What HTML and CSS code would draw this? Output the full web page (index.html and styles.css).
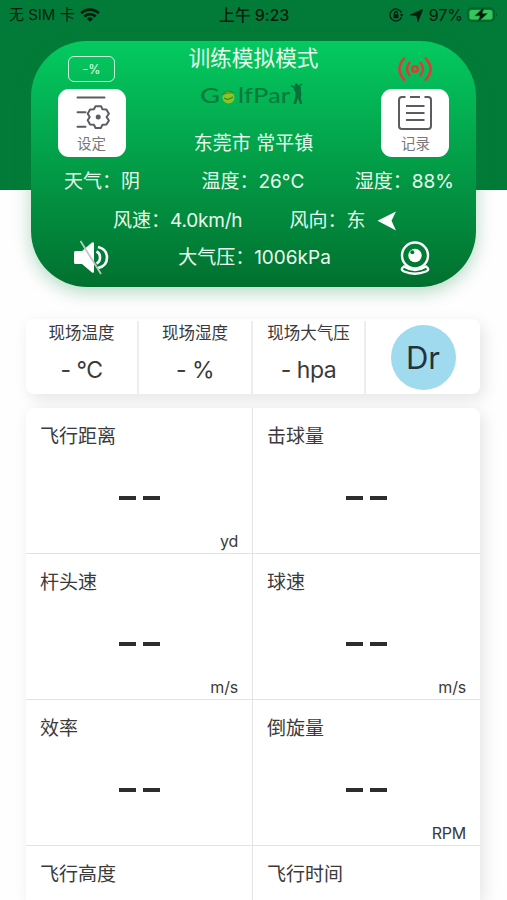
FILE: index.html
```html
<!DOCTYPE html>
<html lang="zh-CN">
<head>
    <meta charset="UTF-8">
    <meta name="viewport" content="width=device-width, initial-scale=1.0">
    <title>GolfPar</title>
    <link rel="stylesheet" href="styles.css">
</head>
<body>

    <div class="top">
        <div class="status-bar">
            <div class="status-left">
                <span>无 SIM 卡</span>
                <svg width="20" height="14" viewBox="0 0 20 14" fill="none" stroke="#031d0e" stroke-width="2.7">
                    <path d="M1.2 5.2a12.4 12.4 0 0 1 17.6 0"/>
                    <path d="M4.4 8.5a8 8 0 0 1 11.2 0"/>
                    <path d="M10 13.7 7 10.7a4.4 4.4 0 0 1 6 0z" fill="#031d0e" stroke="none"/>
                </svg>
            </div>
            <div class="status-time">上午 9:23</div>
            <div class="status-right">
                <svg width="15" height="14" viewBox="0 0 15 14" fill="none" stroke="#031d0e" stroke-width="1.3">
                    <path d="M12.6 5A6 6 0 1 0 12.6 9"/>
                    <path d="M10.8 6.2h3.8l-1.9 2.6z" fill="#031d0e" stroke="none"/>
                    <rect x="4.5" y="6.3" width="5" height="4" fill="#031d0e" stroke="none"/>
                    <path d="M5.5 6.5V5a1.5 1.5 0 0 1 3 0v1.5"/>
                </svg>
                <svg width="13" height="13" viewBox="0 0 13 13"><path d="M12.8.2 8 12.8 6.600 6.600.2 6z" fill="#031d0e" stroke="#031d0e" stroke-width=".6"/></svg>
                <span>97%</span>
                <svg class="battery" width="32" height="16" viewBox="0 0 32 16">
                    <rect x=".7" y="1.2" width="26.6" height="13" rx="4" fill="none" stroke="#075a2c" stroke-width="1.3"/>
                    <rect x="2.4" y="2.9" width="23" height="9.6" rx="2.5" fill="#35c759"/>
                    <path d="M29 5.5q2 2.2 0 4.6z" fill="#075a2c"/>
                    <path d="M17.3 0 7.8 8.8h5.4L10.6 15.6 20.4 6.6h-5.2z" fill="#02180b" stroke="#087536" stroke-width=".5"/>
                </svg>
            </div>
        </div>
    </div>

    <div class="hero">
        <div class="hero-head">
            <div class="side">
                <div class="percent">-%</div>
                <div class="tile">
                    <svg width="36" height="36" viewBox="0 0 36 36" fill="none" stroke="#5c5c60" stroke-width="2" stroke-linecap="round" stroke-linejoin="round">
                        <path d="M3.5 3.500h27M3.5 18.200h8M3.5 32.700h8"/>
                        <path d="M21.5 12.2h5.6l1.4 3.1 3.9.2 2.5 4.2-2.3 3.3 2.3 3.5-2.5 4-3.9.3-1.7 3.1h-5.2l-1.7-3.1-3.8-.4-2.4-4.1 2-3.3-2-3.3 2.4-4.2 3.8-.2z"/>
                        <circle cx="24.200" cy="23" r="1.500" fill="#5c5c60"/>
                    </svg>
                    <span>设定</span>
                </div>
            </div>
            <div class="heading">
                <h1>训练模拟模式</h1>
                <svg class="logo" width="106" height="30" viewBox="0 0 106 30">
                    <g font-family="Lato, sans-serif" font-size="22" font-weight="500" fill="#087b3b">
                        <text x="0" y="22" textLength="20" lengthAdjust="spacingAndGlyphs">G</text>
                        <text x="38" y="22" textLength="52" lengthAdjust="spacingAndGlyphs">lfPar</text>
                    </g>
                    <circle cx="28.5" cy="16.500" r="6" fill="#8fc31f"/>
                    <path d="M22 14q5-7 12-2-7-1-12 2zM24 17q4 3 9-1" fill="none" stroke="#27923a" stroke-width="1.2"/>
                    <path d="M98 4.500l3 1.500-.3 4 .8 3-.8 3.500 1.500 6.500h-2.200l-2-6-2 6h-2.600l1.900-7 .2-4.500-2-3.500 2-2.500z" fill="#08703a"/>
                    <circle cx="96.500" cy="4.500" r="2" fill="#08703a"/>
                    <path d="M91 4.500l5 3M98 6l4-3" stroke="#08703a" stroke-width="1.5"/>
                </svg>
                <div class="place">东莞市 常平镇</div>
            </div>
            <div class="side">
                <svg class="signal" width="36" height="26" viewBox="0 0 36 26" fill="none" stroke="#df3b36" stroke-width="2.5" stroke-linecap="round">
                    <circle cx="18" cy="13" r="2.8"/>
                    <path d="M12.5 6.8q-5 6.2 0 12.4M7.2 2.3q-9.5 10.7 0 21.4M23.5 6.8q5 6.2 0 12.4M28.8 2.3q9.5 10.7 0 21.4"/>
                </svg>
                <div class="tile">
                    <svg width="36" height="36" viewBox="0 0 36 36" fill="none" stroke="#5c5c60" stroke-width="2">
                        <path d="M8.5 3H5a3 3 0 0 0-3 3v26a3 3 0 0 0 3 3h26a3 3 0 0 0 3-3V6a3 3 0 0 0-3-3h-3.500M13 3h10"/>
                        <path d="M9 12h18.500M9 19h18.500M9 26h18.500"/>
                    </svg>
                    <span>记录</span>
                </div>
            </div>
        </div>

        <div class="weather">
            <span>天气：阴</span>
            <span class="temp">温度：<b>26°C</b></span>
            <span>湿度：<b>88%</b></span>
        </div>
        <div class="wind">
            <span>风速：<b>4.0km/h</b></span>
            <span>风向：东</span>
            <svg width="20" height="20" viewBox="0 0 20 20"><path d="M.5 9.8 19 .5 14.5 9.8 19 19.5z" fill="#fff"/></svg>
        </div>
        <div class="pressure">
            <svg width="36" height="36" viewBox="0 0 36 36" fill="none">
                <path d="M0 12.5q0-1.500 1.500-1.500H8L18 2.5q2-1 2 1v28q0 2-2 1L8 24H1.500Q0 24 0 22.500z" fill="#fff"/>
                <path d="M22.500 11.500q3.500 1.500 3.500 6t-3.500 6" stroke="#fff" stroke-width="2.600"/>
                <path d="M24 7q9 2 9 10.500T24 28" stroke="#fff" stroke-width="2.600"/>
                <path d="M6.5 1 27 34" stroke="#bfc9c3" stroke-width="1.8"/>
            </svg>
            <span>大气压：<b>1006kPa</b></span>
            <svg width="32" height="36" viewBox="0 0 32 36" fill="none" stroke="#fff" stroke-width="2.4">
                <circle cx="16" cy="15.500" r="13"/>
                <circle cx="16" cy="15.5" r="6.7" fill="#fff" stroke="none"/>
                <circle cx="13.3" cy="12.3" r="2" fill="#087537" stroke="none"/>
                <path d="M5 26.5q-4.5 3.2 0 5 10.500 4.500 22 0 4.500-1.800 0-5-11 7-22 0z"/>
            </svg>
        </div>
    </div>

    <div class="site">
        <div class="site-item"><span>现场温度</span><b>- °C</b></div>
        <div class="site-item"><span>现场湿度</span><b>- %</b></div>
        <div class="site-item"><span>现场大气压</span><b>- hpa</b></div>
        <div class="club"><div class="club-badge">Dr</div></div>
    </div>

    <div class="metrics">
        <div class="metric"><span>飞行距离</span><div class="value"><i></i><i></i></div><em>yd</em></div>
        <div class="metric"><span>击球量</span><div class="value"><i></i><i></i></div><em></em></div>
        <div class="metric"><span>杆头速</span><div class="value"><i></i><i></i></div><em>m/s</em></div>
        <div class="metric"><span>球速</span><div class="value"><i></i><i></i></div><em>m/s</em></div>
        <div class="metric"><span>效率</span><div class="value"><i></i><i></i></div><em></em></div>
        <div class="metric"><span>倒旋量</span><div class="value"><i></i><i></i></div><em>RPM</em></div>
        <div class="metric"><span>飞行高度</span></div>
        <div class="metric"><span>飞行时间</span></div>
    </div>

</body>
</html>
```

FILE: styles.css
```css
* {
    box-sizing: border-box;
}

body {
    font-family: Inter, "Noto Sans CJK SC", sans-serif;
    background-color: #fefefe;
    color: #3a3a3a;
    margin: 0;
}

svg {
    display: block;
    flex: none;
}

b, em, i {
    font-weight: normal;
    font-style: normal;
}

.top {
    height: 190px;
    background-color: #037b38;
}

.status-bar {
    display: grid;
    grid-template-columns: 1fr auto 1fr;
    align-items: center;
    height: 30px;
    padding: 0 8px 0 9px;
    color: #031d0e;
    font-size: 16px;
    line-height: 30px;
}

.status-left, .status-right {
    display: flex;
    align-items: center;
    gap: 5px;
    white-space: nowrap;
}

.status-left {
    font-size: 15px;
}

.status-right {
    justify-content: flex-end;
    gap: 6px;
}

.status-right .battery {
    margin-left: -2px;
}

.status-time {
    font-weight: 500;
    letter-spacing: -0.1px;
}

.hero {
    width: 445px;
    height: 246px;
    margin: -149px 0 0 31px;
    border-radius: 56px;
    background: linear-gradient(#04ca60, #01702f);
    box-shadow: 0 5px 18px rgba(0, 130, 60, 0.3);
    color: #e9fbef;
    font-size: 19px;
}

.hero-head {
    display: flex;
    justify-content: space-between;
    height: 120px;
    padding: 0 26px;
}

.side {
    width: 69px;
    display: flex;
    flex-direction: column;
    align-items: center;
    justify-content: space-between;
    padding: 15px 0 4px;
}

.percent {
    width: 47px;
    height: 26px;
    border: 1.5px solid #c9f6da;
    border-radius: 6px;
    font-size: 12.5px;
    line-height: 25px;
    text-align: center;
}

.tile {
    width: 68px;
    height: 68px;
    border-radius: 11px;
    background-color: #fff;
    display: flex;
    flex-direction: column;
    align-items: center;
    padding-top: 5px;
    color: #77777b;
    font-size: 14.5px;
    line-height: 28px;
}

.heading {
    display: flex;
    flex-direction: column;
    align-items: center;
}

.heading h1 {
    margin: 0;
    font-size: 21.7px;
    font-weight: normal;
    line-height: 34px;
}

.logo {
    margin: 6px 0 16px;
}

.place {
    line-height: 34px;
}

.weather, .wind, .pressure {
    display: flex;
    align-items: center;
    line-height: 38px;
    white-space: nowrap;
}

.weather {
    justify-content: space-between;
    height: 41px;
    padding: 0 22px 0 33px;
}

.weather .temp {
    margin-left: 11px;
}

.wind {
    height: 37px;
    padding-left: 82px;
}

.wind b {
    letter-spacing: -0.2px;
}

.wind span + span {
    margin: 0 12px 0 47px;
}

.pressure {
    justify-content: space-between;
    height: 37px;
    padding: 0 45px 0 43px;
}

.site {
    display: grid;
    grid-template-columns: 113px 114px 113px 114px;
    width: 454px;
    height: 75px;
    margin: 32px 0 0 26px;
    padding: 2px 0;
    border-radius: 8px;
    background-color: #fff;
    box-shadow: 4px 5px 16px rgba(0, 0, 0, 0.1);
}

.site-item {
    display: flex;
    flex-direction: column;
    align-items: center;
    border-right: 2px solid #ededed;
    font-size: 16.5px;
    line-height: 24px;
}

.site-item b {
    font-size: 23px;
    line-height: 51px;
    letter-spacing: -0.5px;
}

.club {
    display: flex;
    align-items: center;
    justify-content: center;
}

.club-badge {
    width: 65px;
    height: 65px;
    margin-bottom: 2px;
    border-radius: 50%;
    background-color: #9fdaef;
    color: #253237;
    font-size: 31px;
    line-height: 65px;
    text-align: center;
}

.metrics {
    display: grid;
    grid-template-columns: 227px 227px;
    grid-template-rows: repeat(3, 146px) 54px;
    width: 454px;
    margin: 14px 0 0 26px;
    border-radius: 8px 8px 0 0;
    background-color: #fff;
    box-shadow: 4px 4px 16px rgba(0, 0, 0, 0.1);
}

.metric {
    display: flex;
    flex-direction: column;
    padding: 14px 14px 0;
    border-bottom: 1px solid #e3e3e3;
    font-size: 19px;
    line-height: 30px;
}

.metric:nth-child(odd) {
    border-right: 1px solid #e3e3e3;
}

.metric:nth-last-child(-n+2) {
    border-bottom: none;
}

.value {
    display: flex;
    flex: 1;
    align-items: center;
    justify-content: center;
    gap: 7px;
    padding-top: 14px;
}

.value i {
    width: 17px;
    height: 4px;
    background-color: #2d2d2d;
}

.metric em {
    height: 24px;
    font-size: 16px;
    line-height: 24px;
    letter-spacing: -0.2px;
    text-align: right;
}
```
